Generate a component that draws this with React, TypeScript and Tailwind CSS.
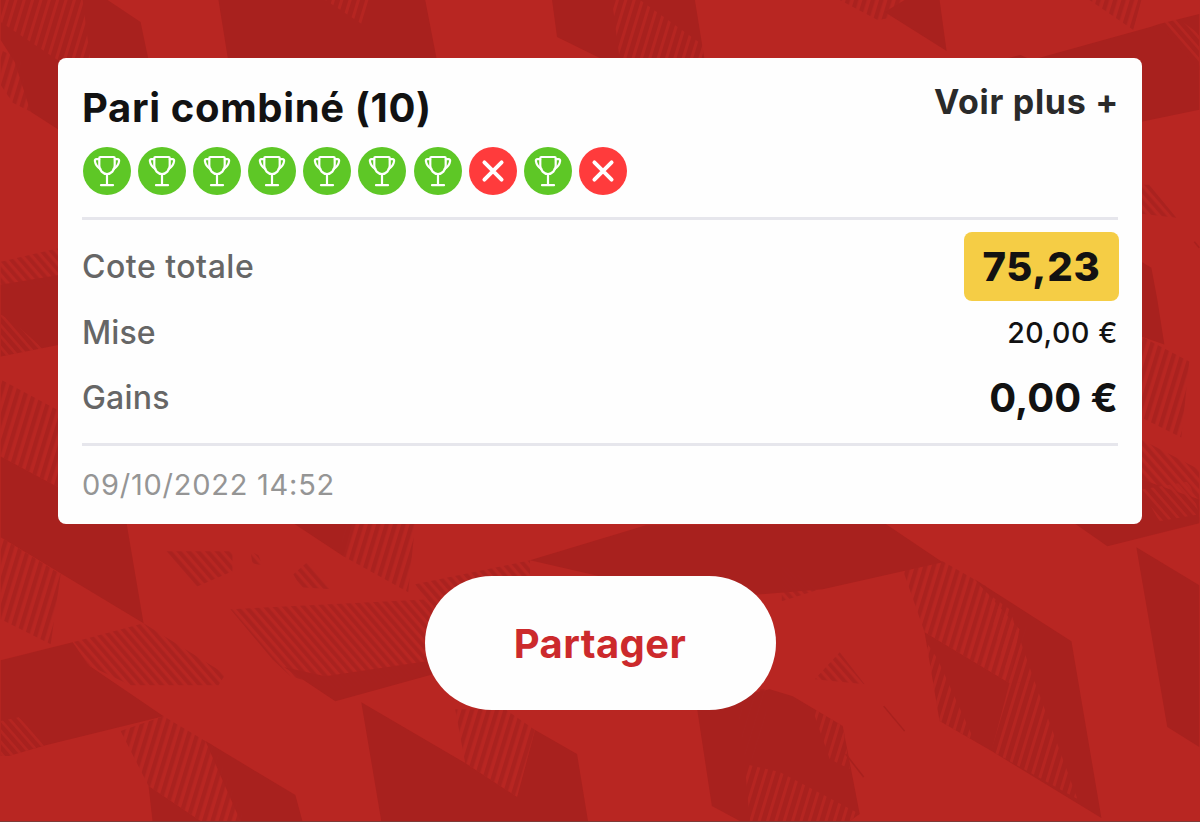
import clsx from "clsx";

const results = ["won", "won", "won", "won", "won", "won", "won", "lost", "won", "lost"];

const DARK = "#a8211e";

// Solid dark facets of the backdrop
const facets = [
  "0,0 107,0 140,22 148,60 148,140 58,130 30,112 14,62 0,40",
  "218,0 425,0 437,62 228,62",
  "552,0 695,0 705,62 608,62 557,37",
  "905,0 940,0 947,51 885,12",
  "983,65 1021,55 1032,60 1151,27 1160,24 1200,66 1200,110 1142,122 1120,60",
  "1160,24 1200,14 1200,70",
  "0,285 60,275 60,345 0,357",
  "1142,262 1152,268 1158,300 1165,345 1142,337",
  "0,457 58,488 126,524 143,624 0,538",
  "0,661 72,643 88,666 163,717 46,746 8,757 0,757",
  "293,524 352,524 343,557",
  "284,668 335,702 440,673 440,660 325,677",
  "205,742 295,796 302,822 240,822",
  "148,787 200,822 152,822",
  "361,703 465,764 517,798 535,731 577,755 588,822 381,822",
  "646,526 885,524 943,563 823,590 700,600 530,561",
  "697,708 770,690 793,697 843,727 860,815 850,822 740,822 712,807",
  "975,580 1072,642 1102,819 992,752 940,722 925,633 1010,684 1020,630",
  "1137,548 1200,586 1200,748 1168,728",
  "1075,524 1142,480 1200,500 1200,524 1108,547",
];

// Steep hatching, dark strokes on the light ground
const steepDark = [
  "0,50 20,60 30,112 12,103 0,85",
  "840,0 905,0 890,18 878,20",
  "1090,0 1142,0 1134,30",
  "0,380 58,411 58,488 0,457",
  "1142,337 1190,362 1182,438 1142,418",
  "0,538 60,575 50,645 0,620",
  "340,524 415,524 408,593 343,557",
  "120,732 163,717 215,748 245,822 200,822 148,787",
  "455,710 505,710 535,731 517,798 465,764",
  "735,690 770,690 760,760 745,760",
  "903,570 943,562 985,586 1030,630 1010,684 925,633",
];

// Steep hatching, light strokes cut out of the dark facets
const steepLight = [
  "0,0 82,0 90,62 60,62 0,22",
  "325,0 370,0 363,25",
  "612,0 640,0 703,45 705,62 620,62",
  "985,592 1010,610 1035,682 1010,684",
  "1010,684 1035,682 1078,800 992,752",
  "925,640 938,660 975,742 940,722",
  "745,765 780,773 860,815 850,822 750,822",
  "812,708 843,727 850,770 830,760",
];

// Diagonal hatching
const slantDark = [
  "72,643 143,624 225,675 218,686 130,686 88,666",
  "165,552 232,552 232,572 195,588",
  "250,552 258,556 262,566 252,564",
  "293,575 308,562 332,590 300,588",
  "230,610 430,600 445,672 335,690 290,677 272,660",
  "0,262 60,248 60,285 0,289",
  "415,585 530,561 530,600 430,610",
  "782,565 820,590 782,602",
  "1142,185 1150,185 1177,218 1142,214",
  "1142,440 1200,470 1200,524 1142,500",
  "815,680 840,653 865,685",
];

const slantLight = [
  "1160,22 1178,18 1200,34 1200,66",
  "0,315 12,322 42,349 0,357",
  "0,722 18,718 46,746 8,757 0,757",
  "1142,490 1190,482 1200,515 1160,522",
];

const Shapes = ({ list, fill }: { list: string[]; fill: string }) => (
  <>
    {list.map((points) => (
      <polygon key={points} points={points} fill={fill} />
    ))}
  </>
);

const Backdrop = () => (
  <svg className="absolute inset-0 h-full w-full" viewBox="0 0 1200 822" aria-hidden="true">
    <defs>
      <pattern id="steep-dark" width="8" height="400" patternUnits="userSpaceOnUse" patternTransform="rotate(17)">
        <rect x="1" width="4.400" height="400" fill={DARK} opacity="0.85" />
      </pattern>
      <pattern id="steep-light" width="8" height="400" patternUnits="userSpaceOnUse" patternTransform="rotate(17)">
        <rect x="5" width="3" height="400" fill="#b82622" opacity="0.85" />
      </pattern>
      <pattern id="slant-dark" width="7.200" height="400" patternUnits="userSpaceOnUse" patternTransform="rotate(-41)">
        <rect x="1" width="4" height="400" fill={DARK} opacity="0.85" />
      </pattern>
      <pattern id="slant-light" width="7.200" height="400" patternUnits="userSpaceOnUse" patternTransform="rotate(-41)">
        <rect x="1" width="2.6" height="400" fill="#b82622" opacity="0.85" />
      </pattern>
    </defs>
    <Shapes list={facets} fill={DARK} />
    <Shapes list={steepDark} fill="url(#steep-dark)" />
    <Shapes list={slantDark} fill="url(#slant-dark)" />
    <Shapes list={steepLight} fill="url(#steep-light)" />
    <Shapes list={slantLight} fill="url(#slant-light)" />
    <path d="M884 707 L905 732 M846 755 L864 778 M1195 242 L1200 248" stroke={DARK} strokeWidth="1.5" />
  </svg>
);

// Round badge for one selection of the combined bet
const ResultIcon = ({ status }: { status: string }) => {
  const won = status === "won";
  return (
    <span className={clsx("block size-12 rounded-full", won ? "bg-[#5ec726]" : "bg-[#ff3b3c]")}>
      <svg viewBox="0 0 48 48" className="size-12" fill="none" stroke="#fff" strokeLinecap="round" strokeLinejoin="round">
        {won ? (
          <g strokeWidth="2.2">
            <path d="M17.300 10h13.400c.7 0 1 .4 1 1v7.800c0 4.600-3.700 8.200-7.700 8.200s-7.700-3.600-7.700-8.200V11c0-.6.3-1 1-1Z" />
            <path d="M16.200 12.200h-2.700c-1.300 0-1.800.7-1.600 1.900.5 3.500 2.200 5.900 5.500 7.900M31.800 12.200h2.700c1.300 0 1.800.7 1.600 1.900-.5 3.500-2.200 5.900-5.500 7.900" />
            <path d="M24 27V38M18 38.200h12" />
          </g>
        ) : (
          <path d="M15.400 15.400 32.600 32.600M32.600 15.400 15.400 32.600" strokeWidth="3.9" />
        )}
      </svg>
    </span>
  );
};

const BetCard = () => (
  <section className="flex h-[466px] w-full flex-col rounded-lg bg-[#fefefe] px-6">
    <header className="flex items-start justify-between">
      <h1 className="mt-[30px] text-[40px] leading-10 font-bold tracking-[0.65px] text-[#121212]">Pari combiné (10)</h1>
      <button className="mt-6 -mr-px text-[34px] leading-10 font-bold tracking-[0.7px] text-[#2a2a2a]">Voir plus +</button>
    </header>

    <div className="mt-[19px] ml-px flex gap-[7.1px]">
      {results.map((status, i) => (
        <ResultIcon key={i} status={status} />
      ))}
    </div>

    <div className="mt-[22px] h-[3px] shrink-0 bg-[#e6e6ec]" />

    <dl className="mt-3 text-[32px] font-[450] text-[#666]">
      <div className="flex h-[69px] items-center justify-between">
        <dt className="tracking-[0.5px]">Cote totale</dt>
        <dd className="-mr-px flex h-[69px] w-[155px] items-center justify-center rounded-lg bg-[#f5cd45] text-[40px] font-extrabold tracking-[0.8px] text-[#121212]">
          75,23
        </dd>
      </div>
      <div className="flex h-[62px] items-center justify-between pt-0.5">
        <dt className="tracking-[0.1px]">Mise</dt>
        <dd className="text-[28.500px] tracking-[0.6px] text-[#121212]">20,00 €</dd>
      </div>
      <div className="flex h-[67px] items-center justify-between pt-0.5">
        <dt className="tracking-[0.2px]">Gains</dt>
        <dd className="text-[40px] font-bold text-[#121212]">0,00 €</dd>
      </div>
    </dl>

    <div className="mt-[13px] h-[3px] shrink-0 bg-[#e6e6ec]" />
    <time className="mt-[19px] text-[29px] leading-10 tracking-[0.75px] text-[#959595]">09/10/2022 14:52</time>
  </section>
);

export default function App() {
  return (
    <main className="relative h-[822px] w-[1200px] overflow-hidden border-b border-[#7f3a35] bg-[#b82622] font-['Inter',sans-serif]">
      <Backdrop />
      <div className="relative flex flex-col items-center px-[58px] pt-[58px]">
        <BetCard />
        <button className="mt-[52px] h-[134px] w-[351px] rounded-full bg-[#fefefe] pt-0.5 text-[40px] font-bold tracking-[0.4px] text-[#cc2a2c]">
          Partager
        </button>
      </div>
    </main>
  );
}
